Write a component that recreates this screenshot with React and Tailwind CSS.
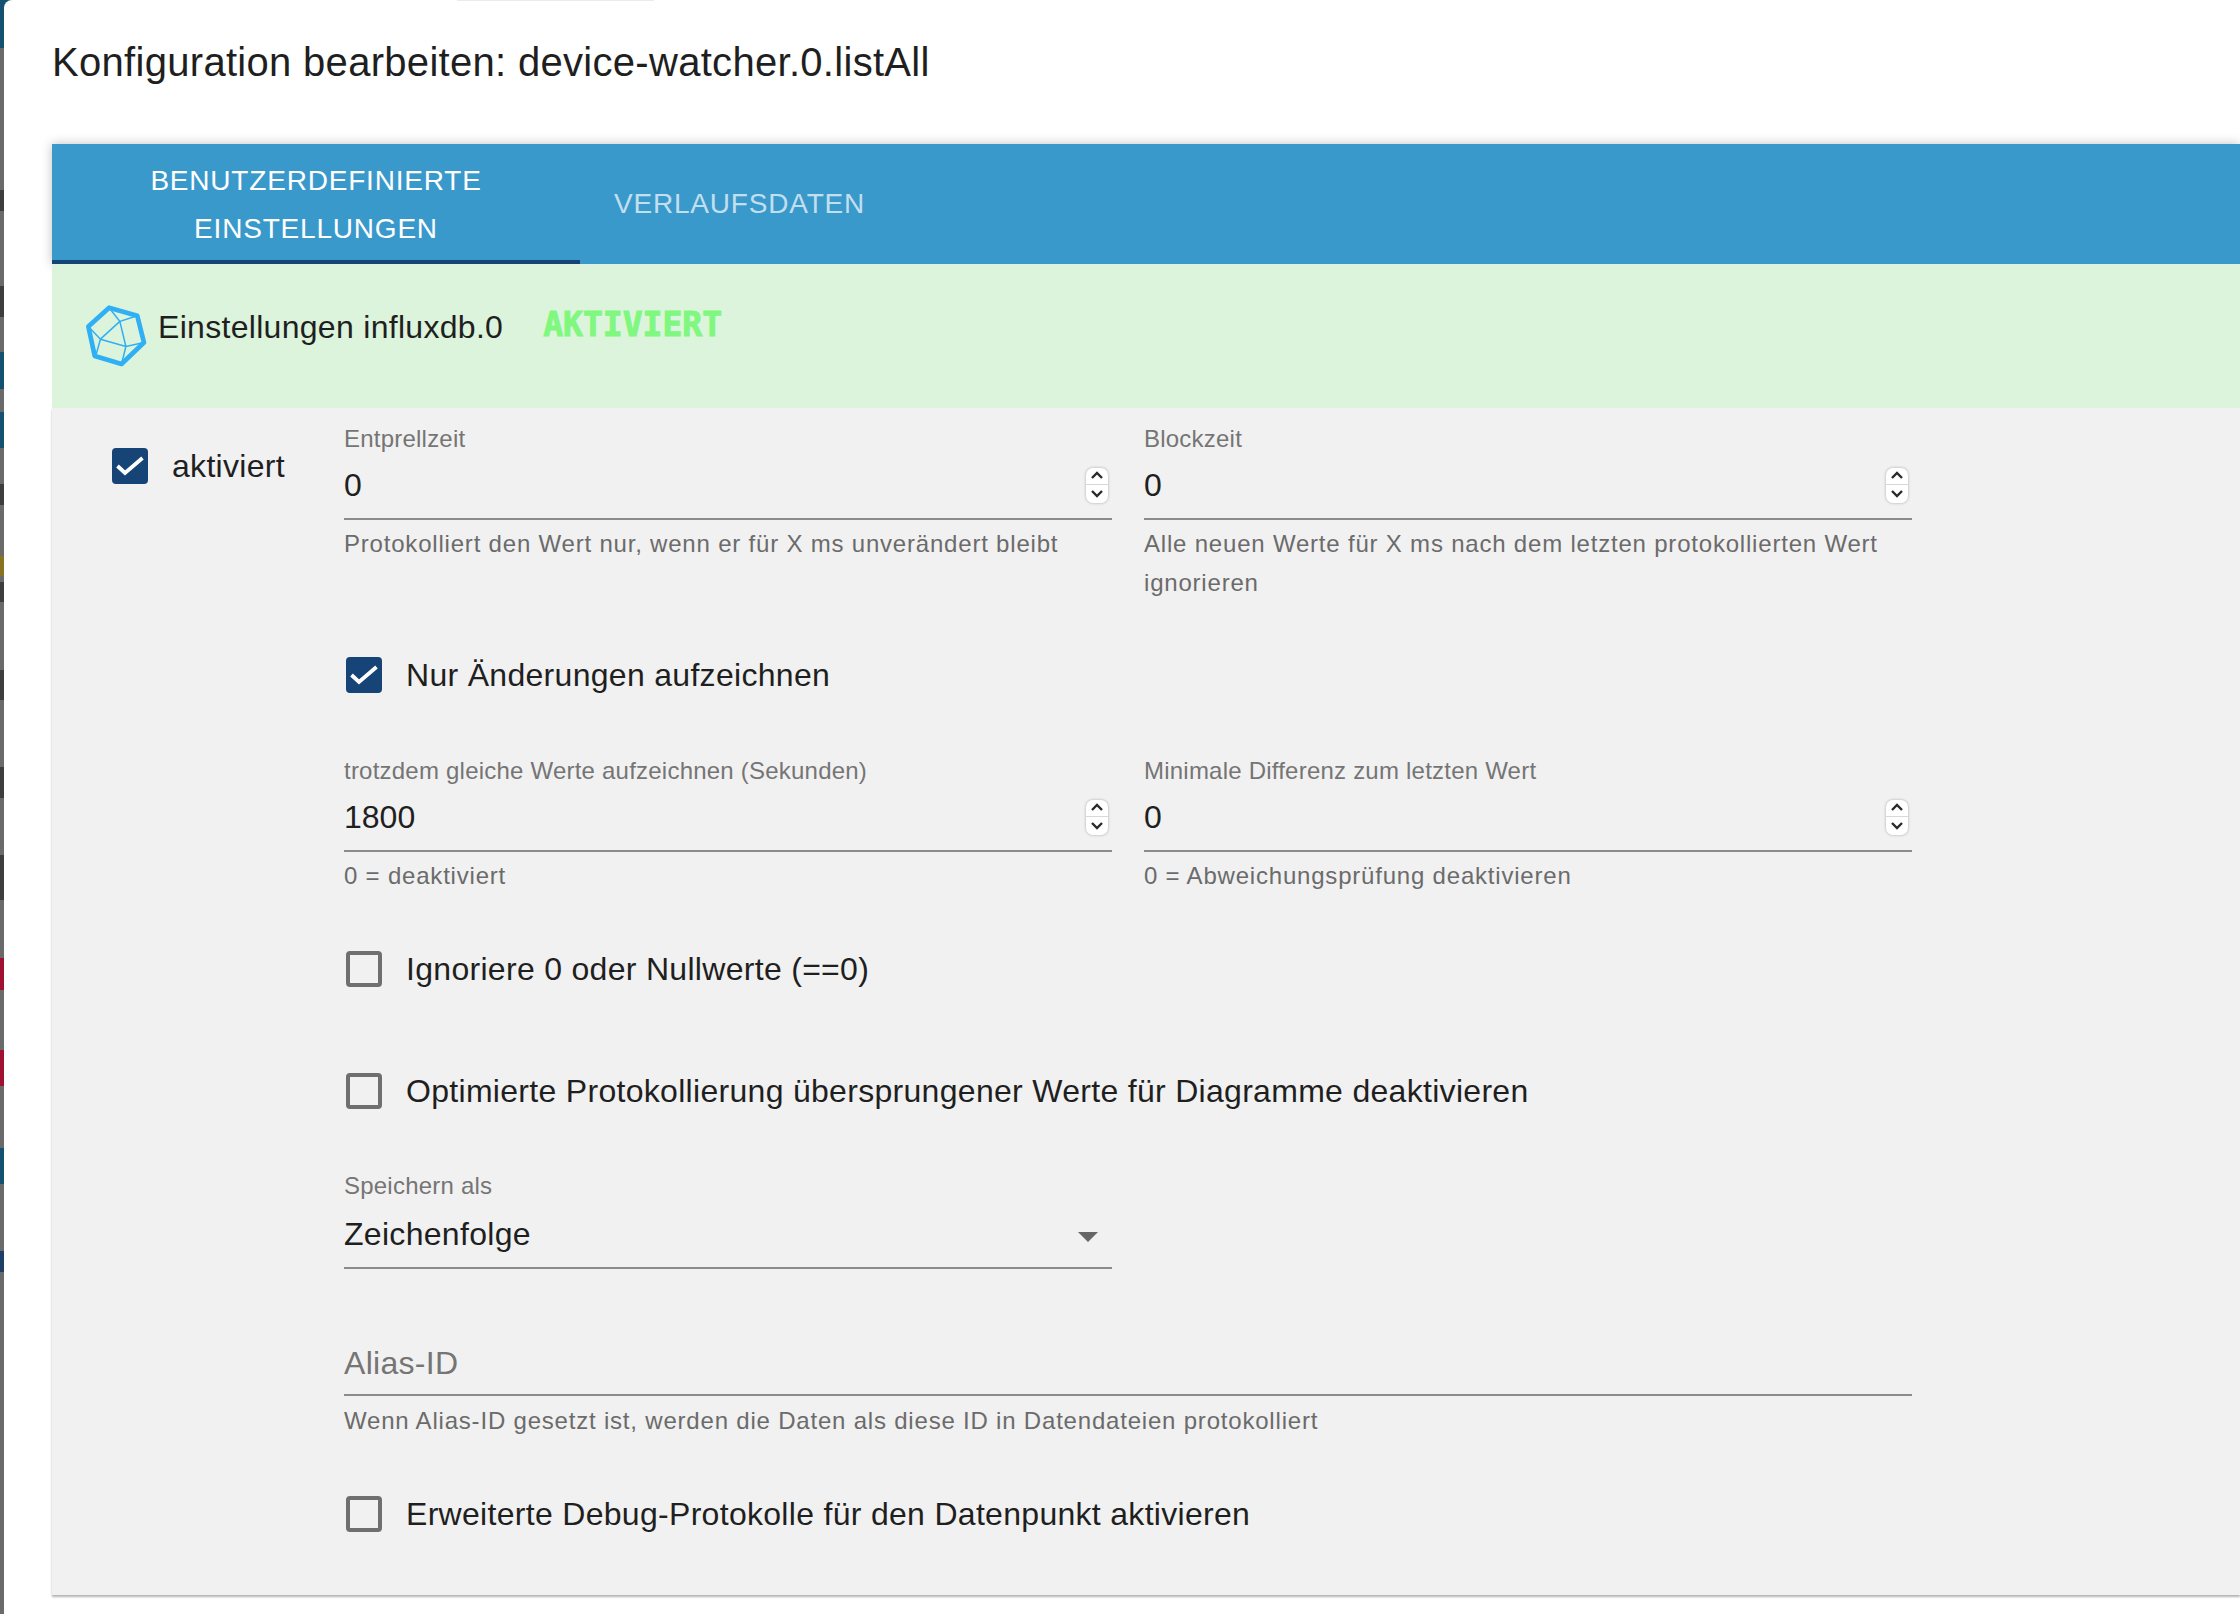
const sideMarks = [
  'h-[48px] bg-[#14506f]',
  'h-[142px] bg-[#6a6a6a]',
  'h-[21px] bg-[#3d3d3d]',
  'h-[75px] bg-[#6a6a6a]',
  'h-[31px] bg-[#3d3d3d]',
  'h-[35px] bg-[#6a6a6a]',
  'h-[37px] bg-[#14506f]',
  'h-[23px] bg-[#6a6a6a]',
  'h-[36px] bg-[#14506f]',
  'h-[36px] bg-[#6a6a6a]',
  'h-[21px] bg-[#3d3d3d]',
  'h-[51px] bg-[#6a6a6a]',
  'h-[20px] bg-[#8a7320]',
  'h-[6px] bg-[#6a6a6a]',
  'h-[20px] bg-[#3d3d3d]',
  'h-[68px] bg-[#6a6a6a]',
  'h-[30px] bg-[#3d3d3d]',
  'h-[67px] bg-[#6a6a6a]',
  'h-[31px] bg-[#3d3d3d]',
  'h-[57px] bg-[#6a6a6a]',
  'h-[45px] bg-[#3d3d3d]',
  'h-[58px] bg-[#6a6a6a]',
  'h-[32px] bg-[#a01030]',
  'h-[60px] bg-[#6a6a6a]',
  'h-[36px] bg-[#a01030]',
  'h-[62px] bg-[#6a6a6a]',
  'h-[36px] bg-[#14506f]',
  'h-[67px] bg-[#6a6a6a]',
  'h-[21px] bg-[#1d3f66]',
];

function Check({ checked, label, className }) {
  return (
    <div className={`flex items-center ${className}`}>
      {checked ? (
        <div className="w-[36px] h-[36px] ml-[2px] rounded-[4px] bg-[#164477]">
          <svg width="36" height="36" viewBox="0 0 36 36" fill="none">
            <path d="M5.5 18 L13 25 L30.5 10" stroke="white" strokeWidth="3.8" />
          </svg>
        </div>
      ) : (
        <div className="w-[36px] h-[36px] ml-[2px] rounded-[4px] border-[4px] border-[#6f6f6f]" />
      )}
      <span className="ml-[24px] text-[32px] leading-[40px] tracking-[0.3px] text-[#1f1f1f]">{label}</span>
    </div>
  );
}

function Spinner() {
  return (
    <div className="w-[22px] h-[35px] rounded-[7px] bg-white shadow-[0_0_3px_rgba(0,0,0,0.3)] flex flex-col items-center overflow-hidden">
      <div className="h-[17px] w-full flex items-center justify-center border-b border-[#d8d8d8]">
        <svg width="14" height="9" viewBox="0 0 14 9" fill="none">
          <path d="M2 7 L7 2 L12 7" stroke="#2a2a2a" strokeWidth="2.4" />
        </svg>
      </div>
      <div className="h-[18px] w-full flex items-center justify-center">
        <svg width="14" height="9" viewBox="0 0 14 9" fill="none">
          <path d="M2 2 L7 7 L12 2" stroke="#2a2a2a" strokeWidth="2.4" />
        </svg>
      </div>
    </div>
  );
}

function NumberField({ label, value, help }) {
  return (
    <div>
      <div className="text-[24px] leading-[36px] tracking-[0.22px] text-[#757575]">{label}</div>
      <div className="h-[63px] flex items-center justify-between border-b-2 border-[#8c8c8c] pr-[4px] pb-[5px]">
        <span className="text-[32px] leading-[40px] text-[#1f1f1f]">{value}</span>
        <Spinner />
      </div>
      <div className="mt-[4px] text-[24px] leading-[39px] tracking-[0.8px] text-[#6b6b6b]">{help}</div>
    </div>
  );
}

function CrystalIcon() {
  return (
    <svg width="67" height="67" viewBox="70 70 200 200" fill="none" stroke="#2fb0f5">
      <path d="M148 84 L232 108 L252 188 L185 252 L105 228 L86 140 Z" strokeWidth="14" strokeLinejoin="round" />
      <path
        d="M148 84 L180 125 L232 108 M180 125 L122 178 L86 140 M122 178 L108 228 M122 178 L198 200 L252 188 M198 200 L185 252 M180 125 L198 200"
        strokeWidth="4.5"
      />
    </svg>
  );
}

export default function App() {
  return (
    <div className="h-screen overflow-hidden flex bg-[#6a6a6a] font-['Liberation_Sans',Arial,sans-serif]">
      <div className="w-[4px] shrink-0 flex flex-col">
        {sideMarks.map((mark, i) => (
          <div key={i} className={mark} />
        ))}
      </div>
      <div className="flex-1 bg-[#14506f] min-w-0">
        <div className="h-full bg-white rounded-tl-[8px] overflow-hidden">
          <div className="h-px ml-[453px] w-[197px] bg-[#e6edf1]" />
          <h1 className="ml-[48px] mt-[37px] text-[40px] leading-[48px] tracking-[0.3px] text-[#1f1f1f]">
            Konfiguration bearbeiten: device-watcher.0.listAll
          </h1>

          <div className="ml-[48px] mt-[58px]">
            <div className="h-[120px] bg-[#3a99cb] flex shadow-[0_0_10px_rgba(0,0,0,0.25)]">
              <div className="w-[528px] border-b-4 border-[#164477] pt-[6px] flex items-center justify-center text-center text-[28px] leading-[48px] tracking-[0.8px] text-white">
                BENUTZERDEFINIERTE
                <br />
                EINSTELLUNGEN
              </div>
              <div className="ml-[34px] flex items-center text-[28px] tracking-[0.8px] text-white/70">VERLAUFSDATEN</div>
            </div>

            <div className="relative h-[144px] bg-[#dcf3dc] rounded-tl-[4px] flex items-start pl-[31px] pt-[39px]">
              <CrystalIcon />
              <span className="ml-[8px] mt-[4px] text-[32px] leading-[40px] tracking-[0.3px] text-[#1f1f1f]">
                Einstellungen influxdb.0
              </span>
              <span className="ml-[40px] mt-[2px] font-['DejaVu_Sans_Mono',monospace] font-bold text-[33px] leading-[40px] text-[#80f880] [-webkit-text-stroke:1px_#80f880]">
                AKTIVIERT
              </span>
            </div>

            <div className="h-[1187px] bg-[#f1f1f1] flex shadow-[0_2px_2px_rgba(0,0,0,0.3)]">
              <Check checked label="aktiviert" className="w-[234px] ml-[58px] mt-[38px] self-start" />
              <div className="w-[1568px] pt-[13px]">
                <div className="grid grid-cols-2 gap-x-[32px]">
                  <NumberField
                    label="Entprellzeit"
                    value="0"
                    help="Protokolliert den Wert nur, wenn er für X ms unverändert bleibt"
                  />
                  <NumberField
                    label="Blockzeit"
                    value="0"
                    help="Alle neuen Werte für X ms nach dem letzten protokollierten Wert ignorieren"
                  />
                </div>

                <Check checked label="Nur Änderungen aufzeichnen" className="mt-[53px]" />

                <div className="grid grid-cols-2 gap-x-[32px] mt-[58px]">
                  <NumberField label="trotzdem gleiche Werte aufzeichnen (Sekunden)" value="1800" help="0 = deaktiviert" />
                  <NumberField label="Minimale Differenz zum letzten Wert" value="0" help="0 = Abweichungsprüfung deaktivieren" />
                </div>

                <Check label="Ignoriere 0 oder Nullwerte (==0)" className="mt-[54px]" />
                <Check label="Optimierte Protokollierung übersprungener Werte für Diagramme deaktivieren" className="mt-[82px]" />

                <div className="w-[768px] mt-[57px]">
                  <div className="text-[24px] leading-[36px] tracking-[0.22px] text-[#757575]">Speichern als</div>
                  <div className="h-[65px] flex items-center justify-between border-b-2 border-[#8c8c8c] pr-[14px] pb-[4px]">
                    <span className="text-[32px] leading-[40px] tracking-[0.3px] text-[#1f1f1f]">Zeichenfolge</span>
                    <svg width="20" height="10" viewBox="0 0 20 10" className="mt-[6px]">
                      <path d="M0 0 H20 L10 10 Z" fill="#666666" />
                    </svg>
                  </div>
                </div>

                <div className="mt-[70px] h-[57px] flex items-center border-b-2 border-[#8c8c8c] text-[32px] tracking-[0.3px] text-[#757575] pb-[8px]">
                  Alias-ID
                </div>
                <div className="mt-[5px] text-[24px] leading-[39px] tracking-[0.8px] text-[#6b6b6b]">
                  Wenn Alias-ID gesetzt ist, werden die Daten als diese ID in Datendateien protokolliert
                </div>

                <Check label="Erweiterte Debug-Protokolle für den Datenpunkt aktivieren" className="mt-[54px]" />
              </div>
            </div>
          </div>
        </div>
      </div>
    </div>
  );
}
